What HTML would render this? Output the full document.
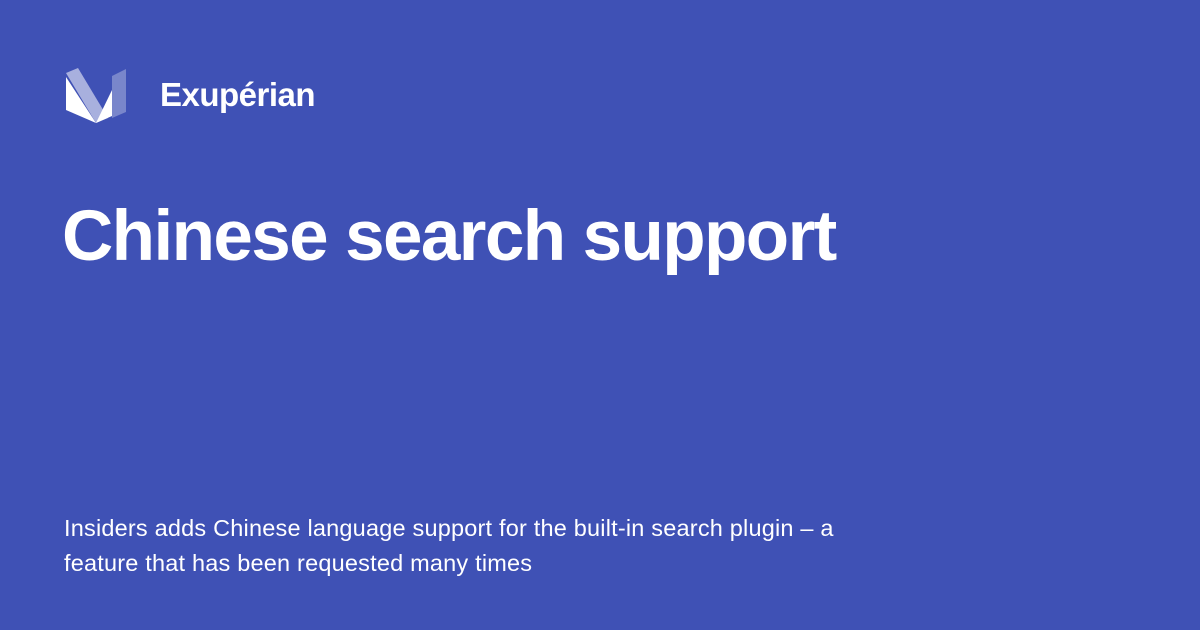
<!DOCTYPE html>
<html><head><meta charset="utf-8"><style>
html,body{margin:0;padding:0}
body{width:1200px;height:630px;background:#3f51b5;position:relative;overflow:hidden;font-family:"Liberation Sans",sans-serif;color:#fff}
.brand{position:absolute;left:160px;top:76px;font-size:33px;font-weight:bold;letter-spacing:-0.5px}
h1{position:absolute;left:62px;top:196px;margin:0;font-size:71px;font-weight:bold;letter-spacing:-1.6px;white-space:nowrap}
p{position:absolute;left:64px;top:511px;margin:0;font-size:23.5px;line-height:35px;width:800px;letter-spacing:0.2px}
</style></head><body>
<svg style="position:absolute;left:0;top:0" width="200" height="140">
<polygon points="66,77 66,110 96,123" fill="#fff"/>
<polygon points="66,73 78,68 108,118 96,123" fill="#a8b0de"/>
<polygon points="96,123 112,116 112,90" fill="#fff"/>
<polygon points="112,76 126,69 126,112 112,118" fill="#7986cb"/>
</svg>
<div class="brand">Exupérian</div>
<h1>Chinese search support</h1>
<p>Insiders adds Chinese language support for the built-in search plugin – a feature that has been requested many times</p>
</body></html>
